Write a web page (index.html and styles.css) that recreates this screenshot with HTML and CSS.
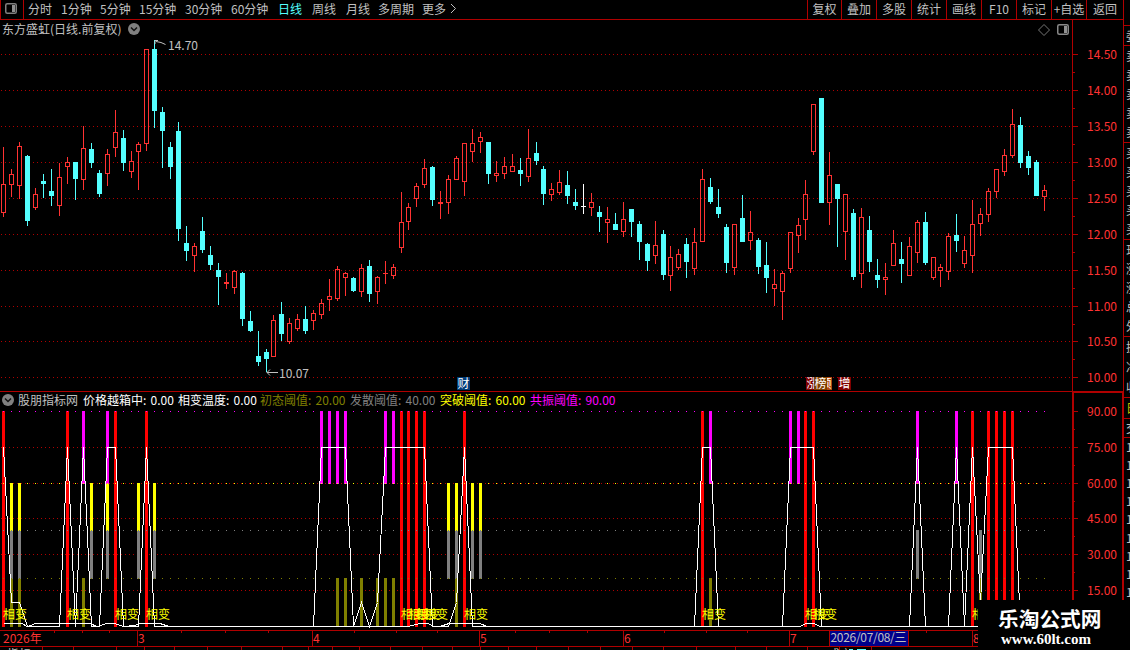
FILE: index.html
```html
<!DOCTYPE html>
<html lang="zh-CN">
    <head>
        <meta charset="UTF-8">
        <title>东方盛虹 日线</title>
        <link rel="stylesheet" href="styles.css">
    </head>
    <body>
        <main class="terminal">
            <div class="left">
                <nav class="toolbar">
                    <span class="layout-toggle">
                        <svg width="12" height="11" viewBox="0 0 12 11">
                            <rect x="0.75" y="0.75" width="10.5" height="9.5" rx="1.5" fill="none" stroke="#808080" stroke-width="1.5"/>
                            <rect x="7" y="2" width="3" height="7" fill="#909090"/>
                        </svg>
                    </span>
                    <div class="periods">
                        <span>分时</span>
                        <span>1分钟</span>
                        <span>5分钟</span>
                        <span>15分钟</span>
                        <span>30分钟</span>
                        <span>60分钟</span>
                        <span class="active">日线</span>
                        <span>周线</span>
                        <span>月线</span>
                        <span>多周期</span>
                        <span>更多</span>
                        <svg width="7" height="11" viewBox="0 0 7 11"><path d="M1 1L5.5 5.5L1 10" fill="none" stroke="#c0c0c0"/></svg>
                    </div>
                    <div class="tools">
                        <span>复权</span>
                        <span>叠加</span>
                        <span>多股</span>
                        <span>统计</span>
                        <span>画线</span>
                        <span>F10</span>
                        <span>标记</span>
                        <span>+自选</span>
                        <span>返回</span>
                    </div>
                </nav>
                <section class="panel price">
                    <svg id="priceChart" width="1123" height="371" viewBox="0 20 1123 371"></svg>
                    <header class="price-title">
                        <span>东方盛虹(日线.前复权)</span>
                        <svg width="12" height="12" viewBox="0 0 12 12">
                            <circle cx="6" cy="6" r="6" fill="#808080"/>
                            <path d="M3 4.5L6 7.5L9 4.5" fill="none" stroke="#111" stroke-width="1.5"/>
                        </svg>
                    </header>
                    <div class="corner">
                        <svg width="12" height="12" viewBox="0 0 12 12"><path d="M6 0.5L11.5 6L6 11.5L0.5 6Z" fill="none" stroke="#777"/></svg>
                        <svg width="12" height="11" viewBox="0 0 12 11">
                            <rect x="0.75" y="0.75" width="10.5" height="9.5" rx="1.5" fill="none" stroke="#888" stroke-width="1.5"/>
                            <rect x="7" y="2" width="3" height="7" fill="#909090"/>
                        </svg>
                    </div>
                </section>
                <section class="panel indicator">
                    <svg id="indicatorChart" width="1123" height="239" viewBox="0 391 1123 239"></svg>
                    <header class="legend">
                        <svg width="12" height="12" viewBox="0 0 12 12">
                            <circle cx="6" cy="6" r="6" fill="#808080"/>
                            <path d="M3 4.5L6 7.5L9 4.5" fill="none" stroke="#111" stroke-width="1.5"/>
                        </svg>
                        <span>股朋指标网</span>
                        <span class="white">价格越箱中: 0.00</span>
                        <span class="white">相变温度: 0.00</span>
                        <span class="olive">初态阈值: 20.00</span>
                        <span class="gray">发散阈值: 40.00</span>
                        <span class="yellow">突破阈值: 60.00</span>
                        <span class="magenta">共振阈值: 90.00</span>
                    </header>
                </section>
                <svg id="timeAxis" width="1123" height="20" viewBox="0 630 1123 20"></svg>
            </div>
            <aside class="quotes">
                <div class="rows head"><span>委</span></div>
                <div class="rows"><span>卖五</span><span>卖四</span><span>卖三</span><span>卖二</span><span>卖一</span></div>
                <div class="rows"><span>买一</span><span>买二</span><span>买三</span><span>买四</span><span>买五</span></div>
                <div class="rows"><span>现价</span><span>涨跌</span><span>涨幅</span><span>总量</span><span>外盘</span></div>
                <div class="rows short"><span>换手</span><span>净资</span><span>收益</span></div>
                <div class="rows tab yellow"><span>日</span></div>
                <div class="rows tab2"><span>交</span></div>
                <div class="rows ticks"><span>14</span><span>14</span><span>14</span><span>14</span><span>14</span><span>14</span><span>14</span><span>14</span><span>14</span></div>
            </aside>
            <div class="watermark">
                <strong>乐淘公式网</strong>
                <b>www.60lt.com</b>
            </div>
        </main>
        <script src="script.js"></script>
    </body>
</html>
```

FILE: styles.css
```css
:root {
    --line: #b00000;
    --red-text: #ff3232;
    --text: #c0c0c0;
    --cyan: #54ffff;
}

body {
    margin: 0;
    background-color: #000;
    color: var(--text);
    font-family: "Noto Sans CJK SC", "Liberation Sans", sans-serif;
    font-size: 12px;
    line-height: 14px;
}

svg {
    display: block;
    flex: none;
}

.terminal {
    position: relative;
    display: flex;
    width: 1130px;
    height: 650px;
    overflow: hidden;
}

.left {
    width: 1123px;
    flex: none;
}

.toolbar {
    display: flex;
    box-sizing: border-box;
    height: 20px;
    border-bottom: 1px solid var(--line);
    white-space: nowrap;
}

.layout-toggle {
    box-sizing: border-box;
    width: 24px;
    padding: 3px 0 0 4px;
    border-left: 1px solid var(--line);
    border-right: 1px solid var(--line);
}

.periods {
    display: grid;
    grid-template-columns: 33px 39px 39px 46px 46px 47px 34px 34px 32px 44px 28px 10px;
    align-items: center;
    padding: 0 0 2px 4px;
}

.active {
    color: var(--cyan);
}

.tools {
    display: grid;
    grid-template-columns: 34px repeat(7, 35px) 37px;
    margin-left: auto;
}

.tools span {
    display: flex;
    align-items: center;
    justify-content: center;
    padding-bottom: 2px;
    border-left: 1px solid var(--line);
}

.panel {
    position: relative;
}

.price {
    height: 371px;
}

.indicator {
    height: 239px;
}

/* titles lie over the charts */
.price-title {
    position: absolute;
    top: 2px;
    left: 2px;
    display: flex;
    align-items: center;
    gap: 7px;
}

.corner {
    position: absolute;
    top: 4px;
    left: 1038px;
    display: flex;
    gap: 7px;
}

.legend {
    position: absolute;
    top: 2px;
    left: 2px;
    display: grid;
    grid-template-columns: 16px 65px 95px 82px 90px 90px 90px 90px;
    align-items: center;
    white-space: pre;
    word-spacing: 1.5px;
}

.white {
    color: #fff;
}

.olive {
    color: #808000;
}

.gray {
    color: #808080;
}

.yellow {
    color: #ff0;
}

.magenta {
    color: #f0f;
}

text {
    font-size: 12px;
    fill: var(--red-text);
}

text.mark {
    fill: var(--text);
}

text.signal {
    fill: #ff0;
}

text.badge {
    fill: #fff;
}

.quotes {
    box-sizing: border-box;
    width: 7px;
    height: 600px;
    padding-top: 25px;
    border-left: 1px solid var(--line);
    overflow: hidden;
    white-space: nowrap;
}

.rows {
    display: flex;
    flex-direction: column;
    justify-content: space-around;
    box-sizing: border-box;
    height: 97px;
    padding-left: 2px;
    border-top: 1px solid var(--line);
}

.rows.head {
    height: 20px;
}

.rows.short {
    height: 61px;
}

.rows.tab {
    height: 21px;
    color: #c0c000;
}

.rows.tab2 {
    height: 19px;
}

.rows.ticks {
    height: 164px;
}

.watermark {
    position: absolute;
    left: 978px;
    top: 600px;
    width: 152px;
    height: 50px;
    box-sizing: border-box;
    padding: 7px 0 0 20px;
    background-color: #000;
    color: #fff;
}

.watermark strong {
    display: block;
    font-size: 20.7px;
    line-height: 22px;
}

.watermark b {
    display: block;
    padding: 1px 0 0 3px;
    font-family: "Liberation Serif", serif;
    font-size: 15px;
    line-height: 18px;
}
```

FILE: script.js
```js
const RED = "#ff3232";
const CYAN = "#54ffff";
const LINE = "#b00000";

// direction, high, body top, body bottom, low
const candles = [
    ["r",147,184,213,217],["r",169,174,185,197],["r",142,146,186,199],["c",155,156,221,226],
    ["r",188,194,208,210],["c",174,181,184,198],["c",169,191,196,206],["r",163,177,206,216],
    ["r",157,162,167,184],["c",162,162,179,200],["r",126,148,180,190],["c",143,149,163,168],
    ["c",170,173,194,197],["r",149,154,174,186],["r",110,132,148,157],["c",130,138,163,171],
    ["r",151,161,172,178],["r",142,144,152,190],["r",49,49,144,151],["c",40,49,111,128],
    ["c",107,112,131,168],["c",142,147,167,179],["c",122,131,229,241],["c",226,243,251,261],
    ["r",243,246,256,272],["c",217,231,250,253],["c",246,255,265,270],["c",263,270,277,305],
    ["r",273,282,284,289],["r",270,271,288,294],["c",272,273,319,326],["c",311,321,331,332],
    ["c",331,356,362,366],["c",349,352,359,372],["r",315,320,357,357],["c",302,314,334,341],
    ["r",318,323,342,344],["r",314,319,329,331],["c",306,319,331,334],["r",310,313,321,330],
    ["r",299,303,315,319],["r",279,296,300,311],["r",266,269,299,301],["r",272,273,278,296],
    ["c",277,278,291,292],["r",264,268,292,297],["c",260,266,294,302],["r",276,277,292,304],
    ["r",261,273,274,284],["r",264,267,276,279],["r",192,222,248,253],["r",203,207,222,230],
    ["r",183,186,199,207],["r",159,168,185,188],["c",166,167,200,206],["r",191,202,204,219],
    ["r",175,179,203,214],["r",156,158,180,180],["r",143,143,182,196],["r",129,143,152,162],
    ["r",132,137,142,153],["c",142,142,174,184],["r",161,173,176,182],["r",157,166,174,179],
    ["r",154,166,172,172],["c",158,170,174,186],["r",129,158,177,182],["c",142,153,161,165],
    ["c",166,169,194,205],["r",183,189,195,201],["r",170,182,193,195],["c",171,185,196,204],
    ["c",189,202,206,210],["w",184,206,207,214],["r",193,202,208,216],["c",206,212,217,232],
    ["r",207,219,223,243],["c",213,224,230,230],["r",202,219,232,237],["c",209,209,222,237],
    ["c",221,224,242,260],["c",243,244,261,271],["r",221,245,256,264],["c",230,234,275,280],
    ["r",246,257,276,291],["r",249,254,268,270],["c",238,244,262,278],["r",228,242,269,275],
    ["r",169,179,242,242],["c",178,187,202,204],["c",189,207,214,218],["c",224,227,263,273],
    ["r",224,224,268,275],["c",195,218,242,242],["r",211,232,241,250],["c",238,240,267,274],
    ["c",242,265,278,293],["r",269,284,289,306],["r",271,273,292,320],["r",232,232,269,273],
    ["r",218,225,236,253],["r",180,194,220,240],["r",104,104,152,155],["c",98,98,203,203],
    ["r",152,175,203,225],["c",184,184,199,247],["r",194,194,232,260],["c",209,213,277,280],
    ["r",208,217,274,288],["c",216,230,262,272],["c",259,275,280,288],["r",263,277,280,295],
    ["r",230,243,266,266],["c",242,259,264,283],["r",237,246,276,276],["r",220,222,253,263],
    ["c",212,222,263,265],["r",257,257,278,280],["r",264,267,271,287],["r",233,236,272,280],
    ["c",214,235,241,252],["r",236,250,264,268],["r",200,224,256,273],["r",208,214,224,236],
    ["r",188,191,215,222],["r",169,169,192,198],["r",149,155,172,176],["r",109,124,156,158],
    ["c",117,125,163,168],["c",151,156,168,175],["c",160,162,196,196],["r",185,190,197,211]
];

const xAt = i => 3 + 8 * i - Math.floor(i / 16.79);

const rect = (x, y, w, h, fill) =>
    `<rect x="${x}" y="${y}" width="${w}" height="${h}" fill="${fill}"/>`;

const text = (x, y, str, cls = "") => `<text x="${x}" y="${y}" class="${cls}">${str}</text>`;

function gridRow(y) {
    let out = "";
    for (let x = 1; x < 1071; x += 4) {
        out += rect(x, y, 1, 1, LINE);
    }
    return out + rect(1073, y, 5, 1, LINE);
}

function candle([dir, high, top, bottom, low], i) {
    const x = xAt(i);
    const color = dir === "r" ? RED : dir === "c" ? CYAN : "#fff";
    let out = rect(x, high, 1, top - high, color) + rect(x, bottom, 1, low - bottom, color);
    if (dir === "r" && bottom - top > 2) {
        out += `<rect x="${x - 1.5}" y="${top + 0.5}" width="4" height="${bottom - top - 1}" fill="none" stroke="${color}"/>`;
    } else {
        out += rect(x - 2, top, 5, bottom - top, color);
    }
    return out;
}

function badge(x, str, fill) {
    return rect(x, 377, 13, 13, fill) + text(x + 0.5, 388, str, "badge");
}

function drawPrice() {
    const rows = [54, 90, 126, 162, 198, 234, 270, 306, 341, 377];
    let out = rect(1072, 20, 1, 371, LINE);
    rows.forEach((y, i) => {
        out += gridRow(y) + text(1087, y + 5, (14.5 - i * 0.5).toFixed(2));
        if (i < rows.length - 1) {
            out += rect(1073, y + 18, 2, 1, LINE);
        }
    });
    out += candles.map(candle).join("");
    out += `<path d="M155 44V40.5H158M156 41.5L161 42.5L165.5 44.5" fill="none" stroke="#c0c0c0"/>` + text(168, 50, "14.70", "mark");
    out += `<path d="M278 372.5H267M270 369.5L267 372.5L270 375.5" fill="none" stroke="#c0c0c0"/>` + text(279, 378, "10.07", "mark");
    out += badge(457, "财", "#003c78");
    out += badge(806, "涨", "#800000") + badge(819, "预", "#b04810") + badge(814, "榜", "#804000");
    out += badge(838, "增", "#800000");
    document.getElementById("priceChart").innerHTML = out;
}

function drawIndicator() {
    const rows = [411, 447, 483, 518, 554, 590];
    let out = rect(0, 391, 1123, 1, LINE) + rect(1072, 391, 2, 239, LINE)
        + rect(1072, 391, 51, 2, LINE) + rect(1122, 391, 1, 239, LINE);
    rows.forEach((y, i) => {
        out += (i ? gridRow(y) : rect(1073, y, 5, 1, LINE));
        out += rect(1074, y + 18, 1, 1, LINE) + text(1087, y + 5, (90 - i * 15).toFixed(2));
    });

    const bars = [
        ["#808000", 578, 49, [1, 2, 10, 42, 43, 45, 47, 48, 49, 57, 89, 123]],
        ["#808080", 530, 49, [1, 2, 11, 13, 17, 19, 56, 57, 59, 60, 115, 123]],
        ["#ff0", 483, 48, [1, 2, 11, 13, 17, 19, 56, 57, 59, 60]],
        ["#f0f", 411, 73, [10, 13, 40, 41, 42, 43, 48, 49, 89, 99, 100, 115, 120]],
        ["#f00", 411, 216, [0, 8, 14, 18, 50, 51, 52, 53, 58, 88, 101, 102, 122, 124, 125, 126, 127]]
    ];
    for (const [color, y, h, list] of bars) {
        out += list.map(i => rect(xAt(i) - 1, y, 3, h, color)).join("");
    }

    const levels = [["#f0f", 411], ["#ff0", 483], ["#808080", 530], ["#808000", 578]];
    for (const [color, y] of levels) {
        out += candles.map((c, i) => rect(xAt(i), y, 1, 1, color)).join("");
    }

    // temperature, zero everywhere except these bars
    const temp = {0: 75, 1: 10, 2: 10, 8: 75, 10: 75, 13: 75, 14: 75, 18: 75, 40: 75, 41: 75, 42: 75, 43: 75,
        45: 10, 47: 10, 48: 75, 49: 75, 50: 75, 51: 75, 52: 75, 53: 75, 57: 10, 58: 75, 88: 75, 89: 75,
        99: 75, 100: 75, 101: 75, 102: 75, 115: 75, 120: 75, 122: 75, 123: 10, 124: 75, 125: 75, 126: 75, 127: 75};
    const points = candles.map((c, i) => `${xAt(i) + 0.5},${Math.round(626 - (temp[i] || 0) * 2.39) + 0.5}`).join(" ");
    const box = "3.5,623.5 22,623.5 27,626.5 31,625.5 35,623.5 90,623.5 97,626.5 107,623.5 115,623.5 123,626.5 135,625.5 140,623.5 160,623.5 169,626.5 408,626.5 420,623.5 428,623.5 434,626.5 440,626.5 449,623.5 480,623.5 487,626.5 800,626.5 806,623.5 814,623.5 820,626.5 1044,626.5";
    for (const p of [box, points]) {
        out += `<polyline points="${p}" fill="none" stroke="#fff" shape-rendering="crispEdges"/>`;
    }

    for (const i of [0, 8, 14, 18, 50, 51, 52, 53, 58, 88, 101, 102, 122]) {
        out += text(xAt(i), 619, "相变", "signal");
    }
    document.getElementById("indicatorChart").innerHTML = out;
}

function drawTimeAxis() {
    let out = rect(0, 630, 1123, 1, LINE) + rect(0, 646, 1123, 1, LINE);
    const months = [[137, "3"], [312, "4"], [479, "5"], [623, "6"], [789, "7"], [972, "8"]];
    out += text(3, 643, "2026年");
    for (const [x, label] of months) {
        out += rect(x, 630, 1, 17, LINE) + text(x + 1, 643, label);
    }
    for (const x of [54, 82, 109, 181, 225, 268, 354, 396, 437, 515, 549, 587, 664, 706, 747, 926]) {
        out += rect(x, 631, 1, 2, LINE);
    }
    for (const x of [42, 73, 116, 144, 174, 207, 241, 282, 308, 332, 359, 390, 422, 452, 480, 508, 536, 568, 600, 632, 663, 696, 735, 766, 807, 839, 871]) {
        out += rect(x, 647, 1, 3, LINE);
    }
    out += rect(829, 630, 80, 17, LINE) + rect(830, 631, 78, 15, "#00008b");
    out += `<text x="830.5" y="642" textLength="76" class="mark">2026/07/08/三</text>`;
    out += text(7, 659, "指标", "mark") + text(828, 659, "成交", "mark");
    out += rect(849, 649, 4, 1, CYAN) + rect(857, 649, 9, 1, CYAN);
    document.getElementById("timeAxis").innerHTML = out;
}

drawPrice();
drawIndicator();
drawTimeAxis();
```
